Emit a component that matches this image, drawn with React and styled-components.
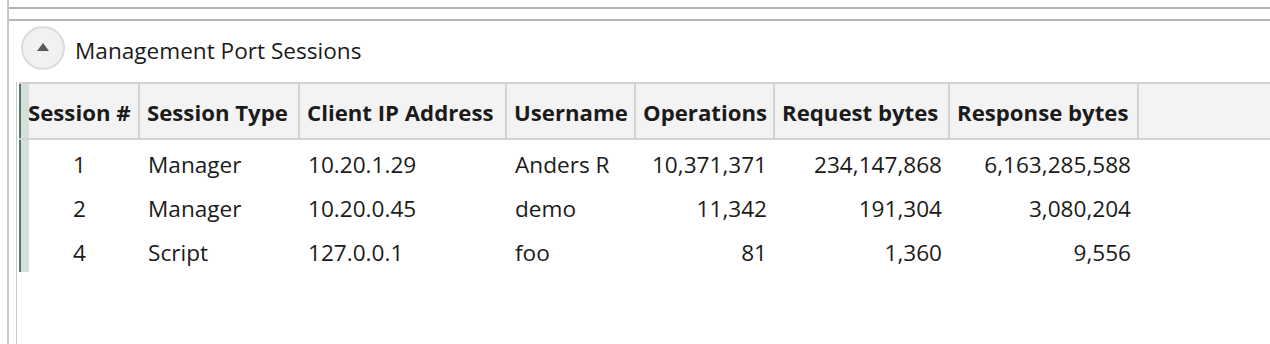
import styled, { createGlobalStyle } from "styled-components";

const GlobalStyle = createGlobalStyle`
  html, body {
    margin: 0;
    padding: 0;
    background: #ffffff;
    overflow: hidden;
  }
  body {
    font-family: "Open Sans", "Noto Sans", "Liberation Sans", sans-serif;
    color: #1b1b1b;
  }
`;

const GRID = "10px 111px 160px 207px 129px 139px 175px 189px 1fr";

const columns = [
  { key: "id", title: "Session #", align: "center", flush: true },
  { key: "type", title: "Session Type", align: "left" },
  { key: "ip", title: "Client IP Address", align: "left" },
  { key: "user", title: "Username", align: "left" },
  { key: "ops", title: "Operations", align: "right" },
  { key: "req", title: "Request bytes", align: "right" },
  { key: "res", title: "Response bytes", align: "right" },
];

const sessions = [
  {
    id: 1,
    type: "Manager",
    ip: "10.20.1.29",
    user: "Anders R",
    ops: "10,371,371",
    req: "234,147,868",
    res: "6,163,285,588",
  },
  {
    id: 2,
    type: "Manager",
    ip: "10.20.0.45",
    user: "demo",
    ops: "11,342",
    req: "191,304",
    res: "3,080,204",
  },
  {
    id: 4,
    type: "Script",
    ip: "127.0.0.1",
    user: "foo",
    ops: "81",
    req: "1,360",
    res: "9,556",
  },
];

const App = () => {
  return (
    <>
      <GlobalStyle />
      <Frame>
        <PreviousPanel />
        <Panel>
          <PanelHeader>
            <CollapseButton aria-label="Collapse">
              <svg width="12" height="8" viewBox="0 0 12 8">
                <polygon points="6,0 12,8 0,8" fill="#5a5a5a" />
              </svg>
            </CollapseButton>
            <PanelTitle>Management Port Sessions</PanelTitle>
          </PanelHeader>
          <Table>
            <HeaderRow>
              <RowMarker />
              {columns.map((col) => (
                <HeaderCell key={col.key} flush={col.flush}>
                  {col.title}
                </HeaderCell>
              ))}
              <HeaderFiller />
            </HeaderRow>
            {sessions.map((s) => (
              <Row key={s.id}>
                <RowMarker />
                {columns.map((col) => (
                  <Cell key={col.key} align={col.align}>
                    {s[col.key]}
                  </Cell>
                ))}
                <div />
              </Row>
            ))}
          </Table>
        </Panel>
      </Frame>
    </>
  );
};

const Frame = styled.div`
  margin-left: 7px;
  height: 344px;
  border-left: 2px solid #c6c6c6;
  display: flex;
  flex-direction: column;
`;

const PreviousPanel = styled.div`
  height: 7px;
  border-bottom: 2px solid #b4b4b4;
  flex: none;
`;

const Panel = styled.div`
  margin-top: 10px;
  border-top: 2px solid #b4b4b4;
  flex: 1;
  display: flex;
  flex-direction: column;
`;

const PanelHeader = styled.div`
  display: flex;
  align-items: center;
  gap: 10px;
  padding: 5px 0 0 12px;
  height: 44px;
`;

const CollapseButton = styled.button`
  width: 44px;
  height: 44px;
  border-radius: 50%;
  border: 2px solid #dadada;
  background: #f1f1f1;
  display: flex;
  align-items: center;
  justify-content: center;
  padding: 0 0 2px 0;
  cursor: pointer;
`;

const PanelTitle = styled.span`
  font-size: 22.6px;
  color: #1b1b1b;
  margin-top: 4px;
`;

const Table = styled.div`
  margin: 12px 0 0 7px;
  padding-left: 2px;
  border-left: 1px solid #c8c8c8;
  flex: 1;
`;

const HeaderRow = styled.div`
  display: grid;
  grid-template-columns: ${GRID};
  height: 54px;
  border-top: 2px solid #d2d2d2;
  border-bottom: 2px solid #d2d2d2;
  background: #f3f3f3;
`;

const HeaderCell = styled.div`
  display: flex;
  align-items: center;
  padding: 3px ${(props) => (props.flush ? "0" : "7px")} 0;
  margin-left: ${(props) => (props.flush ? "-1px" : "0")};
  border-right: 2px solid #d2d2d2;
  font-size: 22.2px;
  font-weight: 700;
  white-space: nowrap;
  overflow: hidden;
  color: #1b1b1b;
`;

const HeaderFiller = styled.div``;

const RowMarker = styled.div`
  background: #d5e0dc;
  border-left: 2px solid #4c7a5d;
`;

const Row = styled.div`
  display: grid;
  grid-template-columns: ${GRID};
  height: 44px;
`;

const Cell = styled.div`
  display: flex;
  align-items: center;
  justify-content: ${(props) =>
    props.align === "right"
      ? "flex-end"
      : props.align === "center"
      ? "center"
      : "flex-start"};
  padding: 4px ${(props) => (props.align === "center" ? "18px" : "8px")} 0 8px;
  font-size: 22.6px;
  white-space: nowrap;
  color: #1b1b1b;
`;

export default App;
